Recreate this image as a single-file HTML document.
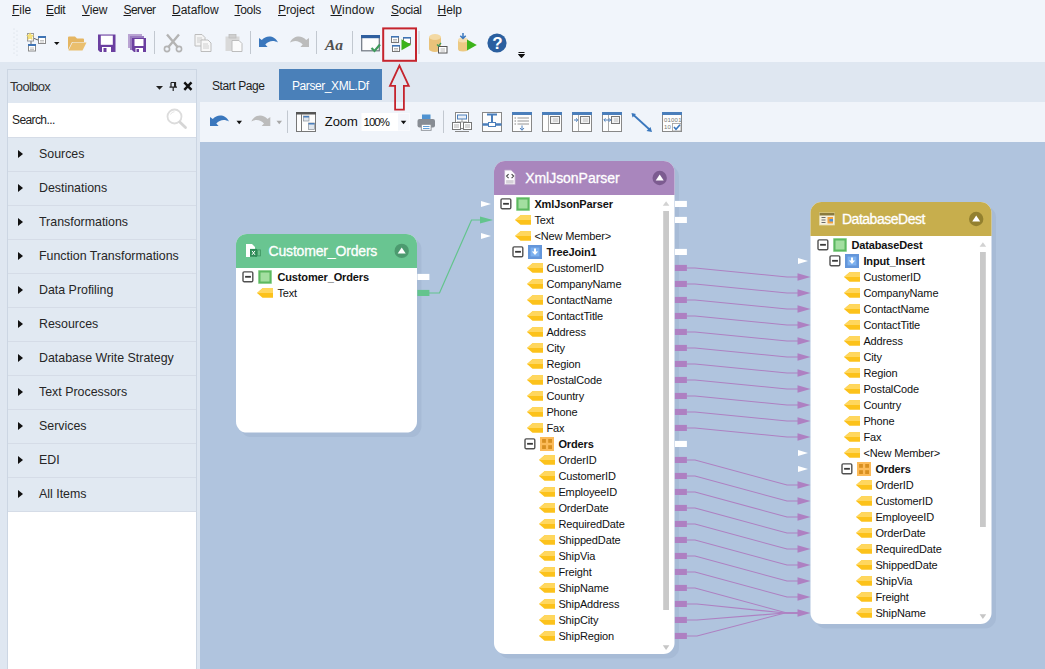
<!DOCTYPE html>
<html><head><meta charset="utf-8"><title>Parser_XML.Df</title>
<style>
*{box-sizing:border-box;margin:0;padding:0}
html,body{width:1045px;height:669px;overflow:hidden;background:#dfe7f1;font-family:"Liberation Sans",sans-serif;color:#1e1e1e}
.abs{position:absolute}
#top{left:0;top:0;width:1045px;height:62px;background:#f1f5fb}
.menu{position:absolute;top:3px;font-size:12px;line-height:14px;color:#1a1a1a;white-space:nowrap}
.menu u{text-decoration:underline;text-underline-offset:1px}
#toolbox{left:7px;top:69px;width:190px;height:601px;padding-top:0;background:#fff;border:1px solid #ccd6e3;border-bottom:none}
#tbhead{left:0;top:0;width:188px;height:33px;background:#dfe7f1}
#tbhead span{position:absolute;left:2px;top:9px;font-size:13px;letter-spacing:-0.66px;color:#333}
#search{left:0;top:33px;width:188px;height:35px;background:#fff}
#search span{position:absolute;left:4px;top:10px;font-size:12px;letter-spacing:-0.6px;color:#222}
.item{position:absolute;left:0;width:188px;height:34px;background:#e1e9f2;border-top:1px solid #d5dce7;font-size:12.4px;line-height:33px;padding-left:31px;color:#262626}
.item:before{content:"";position:absolute;left:9.5px;top:12px;border-left:5px solid #111;border-top:4px solid transparent;border-bottom:4px solid transparent}
#tabs{left:200px;top:69px;width:845px;height:33px;background:#dfe7f1}
.tab{position:absolute;top:0;height:31px;font-size:12px;line-height:31px;padding-top:2px;letter-spacing:-0.42px;color:#1e1e1e;white-space:nowrap}
#doctb{left:200px;top:102px;width:845px;height:40px;background:#f0f4fa}
#canvas{left:200px;top:142px;width:845px;height:527px;background:#b0c4de}
svg text{font-family:"Liberation Sans",sans-serif;font-size:11px;fill:#111;letter-spacing:-0.13px}
</style></head><body>
<div id="top" class="abs">
<span class="menu" style="left:12.0px;letter-spacing:-0.04px"><u>F</u>ile</span>
<span class="menu" style="left:46.0px;letter-spacing:-0.35px"><u>E</u>dit</span>
<span class="menu" style="left:82.0px;letter-spacing:-0.12px"><u>V</u>iew</span>
<span class="menu" style="left:123.5px;letter-spacing:-0.56px"><u>S</u>erver</span>
<span class="menu" style="left:172.0px;letter-spacing:-0.01px"><u>D</u>ataflow</span>
<span class="menu" style="left:234.5px;letter-spacing:-0.32px"><u>T</u>ools</span>
<span class="menu" style="left:278.0px;letter-spacing:-0.11px"><u>P</u>roject</span>
<span class="menu" style="left:330.5px;letter-spacing:0.19px"><u>W</u>indow</span>
<span class="menu" style="left:391.0px;letter-spacing:-0.36px"><u>S</u>ocial</span>
<span class="menu" style="left:437.5px;letter-spacing:-0.05px"><u>H</u>elp</span>
</div>
<div id="toolbox" class="abs">
 <div id="tbhead" class="abs"><span>Toolbox</span></div>
 <div id="search" class="abs"><span>Search...</span></div>
 <div class="item" style="top:67px">Sources</div>
 <div class="item" style="top:101px">Destinations</div>
 <div class="item" style="top:135px">Transformations</div>
 <div class="item" style="top:169px">Function Transformations</div>
 <div class="item" style="top:203px">Data Profiling</div>
 <div class="item" style="top:237px">Resources</div>
 <div class="item" style="top:271px">Database Write Strategy</div>
 <div class="item" style="top:305px">Text Processors</div>
 <div class="item" style="top:339px">Services</div>
 <div class="item" style="top:373px">EDI</div>
 <div class="item" style="top:407px;border-bottom:1px solid #d5dce7;height:35px">All Items</div>
</div>
<div id="tabs" class="abs">
 <span class="tab" style="left:12px">Start Page</span>
 <span class="tab" style="left:79px;width:103px;background:#4a80b9;color:#fff;padding-left:13px">Parser_XML.Df</span>
</div>
<div id="doctb" class="abs"></div>
<div id="canvas" class="abs"></div>
<svg class="abs" style="left:0;top:0" width="1045" height="669" viewBox="0 0 1045 669">
<rect x="240.5" y="238.4" width="181" height="198.7" rx="11" fill="#a7bbd6"/>
<rect x="236" y="233.9" width="181" height="198.7" rx="11" fill="#fff"/>
<path d="M236 267.9 V244.9 a11 11 0 0 1 11 -11 H406 a11 11 0 0 1 11 11 V267.9 Z" fill="#69c591"/>
<text x="268.5" y="256.0" style="font-size:14px;fill:#fff;letter-spacing:-0.17px;stroke:#fff;stroke-width:0.3px">Customer_Orders</text>
<circle cx="401.7" cy="250.9" r="7.2" fill="#4c9a6f"/><path d="M397.7 253.4 L401.7 247.4 L405.7 253.4 Z" fill="#fff"/>
<g transform="translate(246,250.9)"><path d="M0 -7 H6 L9 -4 V6 H0 Z" fill="#fff"/><rect x="4" y="-2" width="7" height="8" fill="#2e8b57"/><path d="M6 0 L9 4 M9 0 L6 4" stroke="#fff" stroke-width="1"/><rect x="11.5" y="-1" width="3" height="6" fill="#6cbf8d" stroke="#3d9462" stroke-width="0.8"/></g>
<rect x="498.5" y="165.5" width="180.5" height="493" rx="11" fill="#a7bbd6"/>
<rect x="494" y="161" width="180.5" height="493" rx="11" fill="#fff"/>
<path d="M494 195 V172 a11 11 0 0 1 11 -11 H663.5 a11 11 0 0 1 11 11 V195 Z" fill="#a986bd"/>
<text x="525.2" y="183.1" style="font-size:14px;fill:#fff;letter-spacing:-0.04px;stroke:#fff;stroke-width:0.3px">XmlJsonParser</text>
<circle cx="659.7" cy="178" r="7.2" fill="#7c5b90"/><path d="M655.7 180.5 L659.7 174.5 L663.7 180.5 Z" fill="#fff"/>
<g transform="translate(504.6,177.6)"><path d="M0 -7.5 H6.5 L10.5 -3.5 V7 H0 Z" fill="#fdfbfe" stroke="#bfaacc" stroke-width="0.8"/><path d="M4 -3.5 L2 -1.5 L4 0.5 M7 -3.5 L9 -1.5 L7 0.5" stroke="#444" stroke-width="1.1" fill="none"/><rect x="1.5" y="2.5" width="7.5" height="3.5" fill="#d4d0d8"/></g>
<rect x="815.0" y="206.5" width="181" height="422" rx="11" fill="#a7bbd6"/>
<rect x="810.5" y="202" width="181" height="422" rx="11" fill="#fff"/>
<path d="M810.5 236 V213 a11 11 0 0 1 11 -11 H980.5 a11 11 0 0 1 11 11 V236 Z" fill="#c7ae4d"/>
<text x="842.0" y="224.1" style="font-size:14px;fill:#fff;letter-spacing:-0.49px;stroke:#fff;stroke-width:0.3px">DatabaseDest</text>
<circle cx="976.2" cy="219" r="7.2" fill="#93802f"/><path d="M972.2 221.5 L976.2 215.5 L980.2 221.5 Z" fill="#fff"/>
<g transform="translate(819.5,219)"><rect x="0" y="-6" width="15" height="12" fill="#f6f1df" stroke="#e7dcb0" stroke-width="0.8"/><rect x="0" y="-6" width="15" height="2.5" fill="#8a7a3d"/><path d="M2 -1.5 H6 M2 1 H6 M2 3.5 H6" stroke="#6b6b6b" stroke-width="1"/><rect x="8" y="-2" width="5.5" height="6.5" fill="#f2a23c"/><rect x="10" y="0" width="3.5" height="2.5" fill="#4f8fd6"/></g>
<g transform="translate(243,277)"><rect x="0" y="-5.1" width="9.8" height="9.8" rx="1.2" fill="#fff" stroke="#505050" stroke-width="1.4"/><rect x="2.1" y="-1.1" width="5.8" height="1.8" fill="#3a3a3a"/></g>
<g transform="translate(258,277)"><rect x="0" y="-7" width="14" height="14" fill="#c8ecc8"/><rect x="1.5" y="-5.5" width="11" height="11" fill="#a3dfa0" stroke="#5cb860" stroke-width="2"/></g>
<text x="277.4" y="281" font-weight="bold">Customer_Orders</text>
<g transform="translate(257,293)"><path d="M0 0 L5.5 -4.7 H16 V4.7 H5.5 Z" fill="#fcc21b"/><path d="M0 0 L5.5 -4.7 H16 V0 Z" fill="#ffd75e"/></g>
<text x="277.4" y="297">Text</text>
<g transform="translate(501,204)"><rect x="0" y="-5.1" width="9.8" height="9.8" rx="1.2" fill="#fff" stroke="#505050" stroke-width="1.4"/><rect x="2.1" y="-1.1" width="5.8" height="1.8" fill="#3a3a3a"/></g>
<g transform="translate(516,204)"><rect x="0" y="-7" width="14" height="14" fill="#c8ecc8"/><rect x="1.5" y="-5.5" width="11" height="11" fill="#a3dfa0" stroke="#5cb860" stroke-width="2"/></g>
<text x="534.4" y="208" font-weight="bold">XmlJsonParser</text>
<g transform="translate(515,220)"><path d="M0 0 L5.5 -4.7 H16 V4.7 H5.5 Z" fill="#fcc21b"/><path d="M0 0 L5.5 -4.7 H16 V0 Z" fill="#ffd75e"/></g>
<text x="534.4" y="224">Text</text>
<g transform="translate(515,236)"><path d="M0 0 L5.5 -4.7 H16 V4.7 H5.5 Z" fill="#fcc21b"/><path d="M0 0 L5.5 -4.7 H16 V0 Z" fill="#ffd75e"/></g>
<text x="534.4" y="240">&lt;New Member&gt;</text>
<g transform="translate(513,252)"><rect x="0" y="-5.1" width="9.8" height="9.8" rx="1.2" fill="#fff" stroke="#505050" stroke-width="1.4"/><rect x="2.1" y="-1.1" width="5.8" height="1.8" fill="#3a3a3a"/></g>
<g transform="translate(528,252)"><rect x="0" y="-7" width="14" height="14" fill="#6496da"/><rect x="2.6" y="-4.4" width="8.8" height="8.8" fill="#7db1ef"/><path d="M6 -3.4 H8 V-0.4 H10.2 L7 3 L3.800 -0.4 H6 Z" fill="#fff"/></g>
<text x="546.4" y="256" font-weight="bold">TreeJoin1</text>
<g transform="translate(527,268)"><path d="M0 0 L5.5 -4.7 H16 V4.7 H5.5 Z" fill="#fcc21b"/><path d="M0 0 L5.5 -4.7 H16 V0 Z" fill="#ffd75e"/></g>
<text x="546.4" y="272">CustomerID</text>
<g transform="translate(527,284)"><path d="M0 0 L5.5 -4.7 H16 V4.7 H5.5 Z" fill="#fcc21b"/><path d="M0 0 L5.5 -4.7 H16 V0 Z" fill="#ffd75e"/></g>
<text x="546.4" y="288">CompanyName</text>
<g transform="translate(527,300)"><path d="M0 0 L5.5 -4.7 H16 V4.7 H5.5 Z" fill="#fcc21b"/><path d="M0 0 L5.5 -4.7 H16 V0 Z" fill="#ffd75e"/></g>
<text x="546.4" y="304">ContactName</text>
<g transform="translate(527,316)"><path d="M0 0 L5.5 -4.7 H16 V4.7 H5.5 Z" fill="#fcc21b"/><path d="M0 0 L5.5 -4.7 H16 V0 Z" fill="#ffd75e"/></g>
<text x="546.4" y="320">ContactTitle</text>
<g transform="translate(527,332)"><path d="M0 0 L5.5 -4.7 H16 V4.7 H5.5 Z" fill="#fcc21b"/><path d="M0 0 L5.5 -4.7 H16 V0 Z" fill="#ffd75e"/></g>
<text x="546.4" y="336">Address</text>
<g transform="translate(527,348)"><path d="M0 0 L5.5 -4.7 H16 V4.7 H5.5 Z" fill="#fcc21b"/><path d="M0 0 L5.5 -4.7 H16 V0 Z" fill="#ffd75e"/></g>
<text x="546.4" y="352">City</text>
<g transform="translate(527,364)"><path d="M0 0 L5.5 -4.7 H16 V4.7 H5.5 Z" fill="#fcc21b"/><path d="M0 0 L5.5 -4.7 H16 V0 Z" fill="#ffd75e"/></g>
<text x="546.4" y="368">Region</text>
<g transform="translate(527,380)"><path d="M0 0 L5.5 -4.7 H16 V4.7 H5.5 Z" fill="#fcc21b"/><path d="M0 0 L5.5 -4.7 H16 V0 Z" fill="#ffd75e"/></g>
<text x="546.4" y="384">PostalCode</text>
<g transform="translate(527,396)"><path d="M0 0 L5.5 -4.7 H16 V4.7 H5.5 Z" fill="#fcc21b"/><path d="M0 0 L5.5 -4.7 H16 V0 Z" fill="#ffd75e"/></g>
<text x="546.4" y="400">Country</text>
<g transform="translate(527,412)"><path d="M0 0 L5.5 -4.7 H16 V4.7 H5.5 Z" fill="#fcc21b"/><path d="M0 0 L5.5 -4.7 H16 V0 Z" fill="#ffd75e"/></g>
<text x="546.4" y="416">Phone</text>
<g transform="translate(527,428)"><path d="M0 0 L5.5 -4.7 H16 V4.7 H5.5 Z" fill="#fcc21b"/><path d="M0 0 L5.5 -4.7 H16 V0 Z" fill="#ffd75e"/></g>
<text x="546.4" y="432">Fax</text>
<g transform="translate(525,444)"><rect x="0" y="-5.1" width="9.8" height="9.8" rx="1.2" fill="#fff" stroke="#505050" stroke-width="1.4"/><rect x="2.1" y="-1.1" width="5.8" height="1.8" fill="#3a3a3a"/></g>
<g transform="translate(540,444)"><rect x="0" y="-7" width="14" height="14" fill="#fcbb59"/><rect x="2.1" y="-5" width="3.8" height="3.8" fill="#d88f20"/><rect x="8.2" y="-5" width="3.8" height="3.8" fill="#d88f20"/><rect x="2.1" y="1.2" width="3.8" height="3.8" fill="#d88f20"/><rect x="8.2" y="1.2" width="3.8" height="3.8" fill="#d88f20"/></g>
<text x="558.4" y="448" font-weight="bold">Orders</text>
<g transform="translate(539,460)"><path d="M0 0 L5.5 -4.7 H16 V4.7 H5.5 Z" fill="#fcc21b"/><path d="M0 0 L5.5 -4.7 H16 V0 Z" fill="#ffd75e"/></g>
<text x="558.4" y="464">OrderID</text>
<g transform="translate(539,476)"><path d="M0 0 L5.5 -4.7 H16 V4.7 H5.5 Z" fill="#fcc21b"/><path d="M0 0 L5.5 -4.7 H16 V0 Z" fill="#ffd75e"/></g>
<text x="558.4" y="480">CustomerID</text>
<g transform="translate(539,492)"><path d="M0 0 L5.5 -4.7 H16 V4.7 H5.5 Z" fill="#fcc21b"/><path d="M0 0 L5.5 -4.7 H16 V0 Z" fill="#ffd75e"/></g>
<text x="558.4" y="496">EmployeeID</text>
<g transform="translate(539,508)"><path d="M0 0 L5.5 -4.7 H16 V4.7 H5.5 Z" fill="#fcc21b"/><path d="M0 0 L5.5 -4.7 H16 V0 Z" fill="#ffd75e"/></g>
<text x="558.4" y="512">OrderDate</text>
<g transform="translate(539,524)"><path d="M0 0 L5.5 -4.7 H16 V4.7 H5.5 Z" fill="#fcc21b"/><path d="M0 0 L5.5 -4.7 H16 V0 Z" fill="#ffd75e"/></g>
<text x="558.4" y="528">RequiredDate</text>
<g transform="translate(539,540)"><path d="M0 0 L5.5 -4.7 H16 V4.7 H5.5 Z" fill="#fcc21b"/><path d="M0 0 L5.5 -4.7 H16 V0 Z" fill="#ffd75e"/></g>
<text x="558.4" y="544">ShippedDate</text>
<g transform="translate(539,556)"><path d="M0 0 L5.5 -4.7 H16 V4.7 H5.5 Z" fill="#fcc21b"/><path d="M0 0 L5.5 -4.7 H16 V0 Z" fill="#ffd75e"/></g>
<text x="558.4" y="560">ShipVia</text>
<g transform="translate(539,572)"><path d="M0 0 L5.5 -4.7 H16 V4.7 H5.5 Z" fill="#fcc21b"/><path d="M0 0 L5.5 -4.7 H16 V0 Z" fill="#ffd75e"/></g>
<text x="558.4" y="576">Freight</text>
<g transform="translate(539,588)"><path d="M0 0 L5.5 -4.7 H16 V4.7 H5.5 Z" fill="#fcc21b"/><path d="M0 0 L5.5 -4.7 H16 V0 Z" fill="#ffd75e"/></g>
<text x="558.4" y="592">ShipName</text>
<g transform="translate(539,604)"><path d="M0 0 L5.5 -4.7 H16 V4.7 H5.5 Z" fill="#fcc21b"/><path d="M0 0 L5.5 -4.7 H16 V0 Z" fill="#ffd75e"/></g>
<text x="558.4" y="608">ShipAddress</text>
<g transform="translate(539,620)"><path d="M0 0 L5.5 -4.7 H16 V4.7 H5.5 Z" fill="#fcc21b"/><path d="M0 0 L5.5 -4.7 H16 V0 Z" fill="#ffd75e"/></g>
<text x="558.4" y="624">ShipCity</text>
<g transform="translate(539,636)"><path d="M0 0 L5.5 -4.7 H16 V4.7 H5.5 Z" fill="#fcc21b"/><path d="M0 0 L5.5 -4.7 H16 V0 Z" fill="#ffd75e"/></g>
<text x="558.4" y="640">ShipRegion</text>
<g transform="translate(818,245)"><rect x="0" y="-5.1" width="9.8" height="9.8" rx="1.2" fill="#fff" stroke="#505050" stroke-width="1.4"/><rect x="2.1" y="-1.1" width="5.8" height="1.8" fill="#3a3a3a"/></g>
<g transform="translate(833,245)"><rect x="0" y="-7" width="14" height="14" fill="#c8ecc8"/><rect x="1.5" y="-5.5" width="11" height="11" fill="#a3dfa0" stroke="#5cb860" stroke-width="2"/></g>
<text x="851.4" y="249" font-weight="bold">DatabaseDest</text>
<g transform="translate(830,261)"><rect x="0" y="-5.1" width="9.8" height="9.8" rx="1.2" fill="#fff" stroke="#505050" stroke-width="1.4"/><rect x="2.1" y="-1.1" width="5.8" height="1.8" fill="#3a3a3a"/></g>
<g transform="translate(845,261)"><rect x="0" y="-7" width="14" height="14" fill="#6496da"/><rect x="2.6" y="-4.4" width="8.8" height="8.8" fill="#7db1ef"/><path d="M6 -3.4 H8 V-0.4 H10.2 L7 3 L3.800 -0.4 H6 Z" fill="#fff"/></g>
<text x="863.4" y="265" font-weight="bold">Input_Insert</text>
<g transform="translate(844,277)"><path d="M0 0 L5.5 -4.7 H16 V4.7 H5.5 Z" fill="#fcc21b"/><path d="M0 0 L5.5 -4.7 H16 V0 Z" fill="#ffd75e"/></g>
<text x="863.4" y="281">CustomerID</text>
<g transform="translate(844,293)"><path d="M0 0 L5.5 -4.7 H16 V4.7 H5.5 Z" fill="#fcc21b"/><path d="M0 0 L5.5 -4.7 H16 V0 Z" fill="#ffd75e"/></g>
<text x="863.4" y="297">CompanyName</text>
<g transform="translate(844,309)"><path d="M0 0 L5.5 -4.7 H16 V4.7 H5.5 Z" fill="#fcc21b"/><path d="M0 0 L5.5 -4.7 H16 V0 Z" fill="#ffd75e"/></g>
<text x="863.4" y="313">ContactName</text>
<g transform="translate(844,325)"><path d="M0 0 L5.5 -4.7 H16 V4.7 H5.5 Z" fill="#fcc21b"/><path d="M0 0 L5.5 -4.7 H16 V0 Z" fill="#ffd75e"/></g>
<text x="863.4" y="329">ContactTitle</text>
<g transform="translate(844,341)"><path d="M0 0 L5.5 -4.7 H16 V4.7 H5.5 Z" fill="#fcc21b"/><path d="M0 0 L5.5 -4.7 H16 V0 Z" fill="#ffd75e"/></g>
<text x="863.4" y="345">Address</text>
<g transform="translate(844,357)"><path d="M0 0 L5.5 -4.7 H16 V4.7 H5.5 Z" fill="#fcc21b"/><path d="M0 0 L5.5 -4.7 H16 V0 Z" fill="#ffd75e"/></g>
<text x="863.4" y="361">City</text>
<g transform="translate(844,373)"><path d="M0 0 L5.5 -4.7 H16 V4.7 H5.5 Z" fill="#fcc21b"/><path d="M0 0 L5.5 -4.7 H16 V0 Z" fill="#ffd75e"/></g>
<text x="863.4" y="377">Region</text>
<g transform="translate(844,389)"><path d="M0 0 L5.5 -4.7 H16 V4.7 H5.5 Z" fill="#fcc21b"/><path d="M0 0 L5.5 -4.7 H16 V0 Z" fill="#ffd75e"/></g>
<text x="863.4" y="393">PostalCode</text>
<g transform="translate(844,405)"><path d="M0 0 L5.5 -4.7 H16 V4.7 H5.5 Z" fill="#fcc21b"/><path d="M0 0 L5.5 -4.7 H16 V0 Z" fill="#ffd75e"/></g>
<text x="863.4" y="409">Country</text>
<g transform="translate(844,421)"><path d="M0 0 L5.5 -4.7 H16 V4.7 H5.5 Z" fill="#fcc21b"/><path d="M0 0 L5.5 -4.7 H16 V0 Z" fill="#ffd75e"/></g>
<text x="863.4" y="425">Phone</text>
<g transform="translate(844,437)"><path d="M0 0 L5.5 -4.7 H16 V4.7 H5.5 Z" fill="#fcc21b"/><path d="M0 0 L5.5 -4.7 H16 V0 Z" fill="#ffd75e"/></g>
<text x="863.4" y="441">Fax</text>
<g transform="translate(844,453)"><path d="M0 0 L5.5 -4.7 H16 V4.7 H5.5 Z" fill="#fcc21b"/><path d="M0 0 L5.5 -4.7 H16 V0 Z" fill="#ffd75e"/></g>
<text x="863.4" y="457">&lt;New Member&gt;</text>
<g transform="translate(842,469)"><rect x="0" y="-5.1" width="9.8" height="9.8" rx="1.2" fill="#fff" stroke="#505050" stroke-width="1.4"/><rect x="2.1" y="-1.1" width="5.8" height="1.8" fill="#3a3a3a"/></g>
<g transform="translate(857,469)"><rect x="0" y="-7" width="14" height="14" fill="#fcbb59"/><rect x="2.1" y="-5" width="3.8" height="3.8" fill="#d88f20"/><rect x="8.2" y="-5" width="3.8" height="3.8" fill="#d88f20"/><rect x="2.1" y="1.2" width="3.8" height="3.8" fill="#d88f20"/><rect x="8.2" y="1.2" width="3.8" height="3.8" fill="#d88f20"/></g>
<text x="875.4" y="473" font-weight="bold">Orders</text>
<g transform="translate(856,485)"><path d="M0 0 L5.5 -4.7 H16 V4.7 H5.5 Z" fill="#fcc21b"/><path d="M0 0 L5.5 -4.7 H16 V0 Z" fill="#ffd75e"/></g>
<text x="875.4" y="489">OrderID</text>
<g transform="translate(856,501)"><path d="M0 0 L5.5 -4.7 H16 V4.7 H5.5 Z" fill="#fcc21b"/><path d="M0 0 L5.5 -4.7 H16 V0 Z" fill="#ffd75e"/></g>
<text x="875.4" y="505">CustomerID</text>
<g transform="translate(856,517)"><path d="M0 0 L5.5 -4.7 H16 V4.7 H5.5 Z" fill="#fcc21b"/><path d="M0 0 L5.5 -4.7 H16 V0 Z" fill="#ffd75e"/></g>
<text x="875.4" y="521">EmployeeID</text>
<g transform="translate(856,533)"><path d="M0 0 L5.5 -4.7 H16 V4.7 H5.5 Z" fill="#fcc21b"/><path d="M0 0 L5.5 -4.7 H16 V0 Z" fill="#ffd75e"/></g>
<text x="875.4" y="537">OrderDate</text>
<g transform="translate(856,549)"><path d="M0 0 L5.5 -4.7 H16 V4.7 H5.5 Z" fill="#fcc21b"/><path d="M0 0 L5.5 -4.7 H16 V0 Z" fill="#ffd75e"/></g>
<text x="875.4" y="553">RequiredDate</text>
<g transform="translate(856,565)"><path d="M0 0 L5.5 -4.7 H16 V4.7 H5.5 Z" fill="#fcc21b"/><path d="M0 0 L5.5 -4.7 H16 V0 Z" fill="#ffd75e"/></g>
<text x="875.4" y="569">ShippedDate</text>
<g transform="translate(856,581)"><path d="M0 0 L5.5 -4.7 H16 V4.7 H5.5 Z" fill="#fcc21b"/><path d="M0 0 L5.5 -4.7 H16 V0 Z" fill="#ffd75e"/></g>
<text x="875.4" y="585">ShipVia</text>
<g transform="translate(856,597)"><path d="M0 0 L5.5 -4.7 H16 V4.7 H5.5 Z" fill="#fcc21b"/><path d="M0 0 L5.5 -4.7 H16 V0 Z" fill="#ffd75e"/></g>
<text x="875.4" y="601">Freight</text>
<g transform="translate(856,613)"><path d="M0 0 L5.5 -4.7 H16 V4.7 H5.5 Z" fill="#fcc21b"/><path d="M0 0 L5.5 -4.7 H16 V0 Z" fill="#ffd75e"/></g>
<text x="875.4" y="617">ShipName</text>
<rect x="663.2" y="211" width="5.8" height="399" fill="#c9c9c9"/><path d="M662.8000000000001 205.79999999999998 L666.1 201.2 L669.4000000000001 205.79999999999998 Z" fill="#d2d2d2"/><path d="M662.8000000000001 645.3 L666.1 649.9 L669.4000000000001 645.3 Z" fill="#c6c6c6"/>
<rect x="980" y="252" width="5.8" height="275" fill="#c9c9c9"/><path d="M979.6 246.79999999999998 L982.9 242.2 L986.2 246.79999999999998 Z" fill="#d2d2d2"/><path d="M979.6 614.3 L982.9 618.9 L986.2 614.3 Z" fill="#c6c6c6"/>
<rect x="417.4" y="273.9" width="12" height="6.1" fill="#fff"/>
<rect x="417.4" y="289.9" width="12" height="6.1" fill="#63c48d"/>
<rect x="674.9" y="200.9" width="12" height="6.1" fill="#fff"/>
<rect x="674.9" y="216.9" width="12" height="6.1" fill="#fff"/>
<rect x="674.9" y="248.9" width="12" height="6.1" fill="#fff"/>
<rect x="674.9" y="440.9" width="12" height="6.1" fill="#fff"/>
<rect x="674.9" y="264.9" width="12" height="6.1" fill="#ae80c2"/>
<rect x="674.9" y="280.9" width="12" height="6.1" fill="#ae80c2"/>
<rect x="674.9" y="296.9" width="12" height="6.1" fill="#ae80c2"/>
<rect x="674.9" y="312.9" width="12" height="6.1" fill="#ae80c2"/>
<rect x="674.9" y="328.9" width="12" height="6.1" fill="#ae80c2"/>
<rect x="674.9" y="344.9" width="12" height="6.1" fill="#ae80c2"/>
<rect x="674.9" y="360.9" width="12" height="6.1" fill="#ae80c2"/>
<rect x="674.9" y="376.9" width="12" height="6.1" fill="#ae80c2"/>
<rect x="674.9" y="392.9" width="12" height="6.1" fill="#ae80c2"/>
<rect x="674.9" y="408.9" width="12" height="6.1" fill="#ae80c2"/>
<rect x="674.9" y="424.9" width="12" height="6.1" fill="#ae80c2"/>
<rect x="674.9" y="456.9" width="12" height="6.1" fill="#ae80c2"/>
<rect x="674.9" y="472.9" width="12" height="6.1" fill="#ae80c2"/>
<rect x="674.9" y="488.9" width="12" height="6.1" fill="#ae80c2"/>
<rect x="674.9" y="504.9" width="12" height="6.1" fill="#ae80c2"/>
<rect x="674.9" y="520.9" width="12" height="6.1" fill="#ae80c2"/>
<rect x="674.9" y="536.9" width="12" height="6.1" fill="#ae80c2"/>
<rect x="674.9" y="552.9" width="12" height="6.1" fill="#ae80c2"/>
<rect x="674.9" y="568.9" width="12" height="6.1" fill="#ae80c2"/>
<rect x="674.9" y="584.9" width="12" height="6.1" fill="#ae80c2"/>
<rect x="674.9" y="600.9" width="12" height="6.1" fill="#ae80c2"/>
<rect x="674.9" y="616.9" width="12" height="6.1" fill="#ae80c2"/>
<rect x="674.9" y="632.9" width="12" height="6.1" fill="#ae80c2"/>
<path d="M491 204 L481 201 V207 Z" fill="#fff"/>
<path d="M491 236 L481 233 V239 Z" fill="#fff"/>
<path d="M493 220 L480 216.5 V223.5 Z" fill="#63c48d"/>
<path d="M429 293 H439.5 L471.5 220 H482" stroke="#63c48d" stroke-width="1.2" fill="none"/>
<path d="M808 261 L798 258 V264 Z" fill="#fff"/>
<path d="M808 453 L798 450 V456 Z" fill="#fff"/>
<path d="M808 469 L798 466 V472 Z" fill="#fff"/>
<path d="M810.5 277 L797.5 273.3 V280.7 Z" fill="#ae80c2"/>
<path d="M810.5 293 L797.5 289.3 V296.7 Z" fill="#ae80c2"/>
<path d="M810.5 309 L797.5 305.3 V312.7 Z" fill="#ae80c2"/>
<path d="M810.5 325 L797.5 321.3 V328.7 Z" fill="#ae80c2"/>
<path d="M810.5 341 L797.5 337.3 V344.7 Z" fill="#ae80c2"/>
<path d="M810.5 357 L797.5 353.3 V360.7 Z" fill="#ae80c2"/>
<path d="M810.5 373 L797.5 369.3 V376.7 Z" fill="#ae80c2"/>
<path d="M810.5 389 L797.5 385.3 V392.7 Z" fill="#ae80c2"/>
<path d="M810.5 405 L797.5 401.3 V408.7 Z" fill="#ae80c2"/>
<path d="M810.5 421 L797.5 417.3 V424.7 Z" fill="#ae80c2"/>
<path d="M810.5 437 L797.5 433.3 V440.7 Z" fill="#ae80c2"/>
<path d="M810.5 485 L797.5 481.3 V488.7 Z" fill="#ae80c2"/>
<path d="M810.5 501 L797.5 497.3 V504.7 Z" fill="#ae80c2"/>
<path d="M810.5 517 L797.5 513.3 V520.7 Z" fill="#ae80c2"/>
<path d="M810.5 533 L797.5 529.3 V536.7 Z" fill="#ae80c2"/>
<path d="M810.5 549 L797.5 545.3 V552.7 Z" fill="#ae80c2"/>
<path d="M810.5 565 L797.5 561.3 V568.7 Z" fill="#ae80c2"/>
<path d="M810.5 581 L797.5 577.3 V584.7 Z" fill="#ae80c2"/>
<path d="M810.5 597 L797.5 593.3 V600.7 Z" fill="#ae80c2"/>
<path d="M810.5 613 L797.5 609.3 V616.7 Z" fill="#ae80c2"/>
<path d="M687 268 H695 L787 277 H798" stroke="#ae80c2" stroke-width="1.1" fill="none"/>
<path d="M687 284 H695 L787 293 H798" stroke="#ae80c2" stroke-width="1.1" fill="none"/>
<path d="M687 300 H695 L787 309 H798" stroke="#ae80c2" stroke-width="1.1" fill="none"/>
<path d="M687 316 H695 L787 325 H798" stroke="#ae80c2" stroke-width="1.1" fill="none"/>
<path d="M687 332 H695 L787 341 H798" stroke="#ae80c2" stroke-width="1.1" fill="none"/>
<path d="M687 348 H695 L787 357 H798" stroke="#ae80c2" stroke-width="1.1" fill="none"/>
<path d="M687 364 H695 L787 373 H798" stroke="#ae80c2" stroke-width="1.1" fill="none"/>
<path d="M687 380 H695 L787 389 H798" stroke="#ae80c2" stroke-width="1.1" fill="none"/>
<path d="M687 396 H695 L787 405 H798" stroke="#ae80c2" stroke-width="1.1" fill="none"/>
<path d="M687 412 H695 L787 421 H798" stroke="#ae80c2" stroke-width="1.1" fill="none"/>
<path d="M687 428 H695 L787 437 H798" stroke="#ae80c2" stroke-width="1.1" fill="none"/>
<path d="M687 460 H695 L787 485 H798" stroke="#ae80c2" stroke-width="1.1" fill="none"/>
<path d="M687 476 H695 L787 501 H798" stroke="#ae80c2" stroke-width="1.1" fill="none"/>
<path d="M687 492 H695 L787 517 H798" stroke="#ae80c2" stroke-width="1.1" fill="none"/>
<path d="M687 508 H695 L787 533 H798" stroke="#ae80c2" stroke-width="1.1" fill="none"/>
<path d="M687 524 H695 L787 549 H798" stroke="#ae80c2" stroke-width="1.1" fill="none"/>
<path d="M687 540 H695 L787 565 H798" stroke="#ae80c2" stroke-width="1.1" fill="none"/>
<path d="M687 556 H695 L787 581 H798" stroke="#ae80c2" stroke-width="1.1" fill="none"/>
<path d="M687 572 H695 L787 597 H798" stroke="#ae80c2" stroke-width="1.1" fill="none"/>
<path d="M687 588 H695 L787 613 H798" stroke="#ae80c2" stroke-width="1.1" fill="none"/>
<path d="M687 604 H697 L785 613 H798" stroke="#ae80c2" stroke-width="1.1" fill="none"/>
<path d="M687 620 H697 L785 613 H798" stroke="#ae80c2" stroke-width="1.1" fill="none"/>
<path d="M687 636 H697 L785 613 H798" stroke="#ae80c2" stroke-width="1.1" fill="none"/>
<!-- main toolbar -->
<g id="grip" fill="#d3d8e0">
<circle cx="14" cy="29" r="0.6"/><circle cx="14" cy="33" r="0.6"/><circle cx="14" cy="37" r="0.6"/><circle cx="14" cy="41" r="0.6"/><circle cx="14" cy="45" r="0.6"/><circle cx="14" cy="49" r="0.6"/><circle cx="14" cy="53" r="0.6"/>
<circle cx="17" cy="31" r="0.6"/><circle cx="17" cy="35" r="0.6"/><circle cx="17" cy="39" r="0.6"/><circle cx="17" cy="43" r="0.6"/><circle cx="17" cy="47" r="0.6"/><circle cx="17" cy="51" r="0.6"/><circle cx="17" cy="55" r="0.6"/>
</g>
<!-- new dataflow -->
<g>
<path d="M33 38 L38 40 M31 41 V44" stroke="#666" stroke-width="1" fill="none"/>
<rect x="27.500" y="33.500" width="6" height="7.500" fill="#fff" stroke="#9a9a9a"/>
<path d="M30 32.800 L31.100 35 L33.500 35.400 L31.800 37 L32.200 39.400 L30 38.300 L27.800 39.400 L28.200 37 L26.600 35.400 L28.900 35 Z" fill="#f6e27a" stroke="#e9cf55" stroke-width="0.5"/>
<rect x="38.5" y="36.5" width="7" height="7" fill="#fff" stroke="#8a8a8a"/><rect x="38" y="36" width="8" height="2" fill="#3f74b5"/>
<path d="M40 40.5 H44 M40 42 H44" stroke="#aaa" stroke-width="0.7"/>
<rect x="28.5" y="44.500" width="7" height="6.5" fill="#fff" stroke="#8a8a8a"/><rect x="28" y="44" width="8" height="2" fill="#3f74b5"/>
<path d="M30 48 H34 M30 49.500 H34" stroke="#aaa" stroke-width="0.7"/>
</g>
<path d="M54 42 H59.500 L56.750 45 Z" fill="#111"/>
<!-- folder -->
<g>
<path d="M68 50 V37.500 a1 1 0 0 1 1 -1 H75 L77 38.500 H83 a1 1 0 0 1 1 1 V42 H72 L68 50 Z" fill="#e5b662"/>
<path d="M68.500 50.500 L72.500 42.500 H86.500 L82.500 50.500 Z" fill="#eabf6e"/>
</g>
<!-- save -->
<g>
<path d="M98 34.500 H115.500 V52 H100 L98 50 Z" fill="#6b3fa0"/>
<rect x="100.800" y="35.600" width="12" height="9.200" fill="#fff"/>
<rect x="102" y="47" width="9" height="5" fill="#fff"/><rect x="103.500" y="48" width="3" height="4" fill="#6b3fa0"/>
</g>
<!-- save all -->
<g>
<path d="M128 34 H142 V48 H128 Z" fill="#b9a3d3"/>
<path d="M130 36 H144 V50 H130 Z" fill="#9a7cc0"/>
<path d="M132 38 H146 V52 H134 L132 50 Z" fill="#6b3fa0"/>
<rect x="134.500" y="39" width="9" height="7" fill="#fff"/>
<rect x="135.500" y="48" width="7.500" height="4" fill="#fff"/><rect x="136.500" y="49" width="2.500" height="3" fill="#6b3fa0"/>
</g>
<path d="M154.500 31 V54 M250.500 31 V54 M316.500 31 V54 M352.500 31 V54 M419 31 V54" stroke="#c2c8d0" stroke-width="1"/>
<!-- scissors -->
<g stroke="#b4b4b4" fill="none" stroke-width="2">
<path d="M167 34.500 L178 47.500 M179 34.500 L168 47.500" stroke-width="2.400"/>
<circle cx="167" cy="49" r="2.600" stroke-width="1.600"/><circle cx="179" cy="49" r="2.600" stroke-width="1.600"/>
</g>
<!-- copy -->
<g>
<path d="M195 34.500 H202 L205 37.500 V46 H195 Z" fill="#f4f4f4" stroke="#bdbdbd"/>
<path d="M197 38 H202 M197 40 H203 M197 42 H200" stroke="#c4c4c4" stroke-width="0.8"/>
<path d="M201 40 H208 L211 43 V51.500 H201 Z" fill="#f8f8f8" stroke="#bdbdbd"/>
<path d="M203 44 H208 M203 46 H209 M203 48 H209" stroke="#c4c4c4" stroke-width="0.8"/>
</g>
<!-- paste -->
<g>
<rect x="225.500" y="36.500" width="14" height="14.500" fill="#d9d9d9"/>
<rect x="229" y="34.500" width="7" height="3.500" fill="#cfcfcf" stroke="#bdbdbd" stroke-width="0.8"/>
<path d="M232 40.500 H239 L242 43.500 V51.500 H232 Z" fill="#fbfbfb" stroke="#bdbdbd"/>
</g>
<!-- undo -->
<path id="undoP" d="M259 47 V38 L261.800 40 C266 35 274.500 35 278 42.500 C273.500 39.800 268.500 40.800 265.300 44.600 L267.600 47 Z" fill="#3a77bd"/>
<!-- redo -->
<path d="M309 47 V38 L306.200 40 C302 35 293.500 35 290 42.500 C294.500 39.800 299.500 40.800 302.700 44.600 L300.400 47 Z" fill="#bcbcbc"/>
<!-- Aa -->
<text x="325" y="49.500" style="font-family:'Liberation Serif',serif;font-size:15.500px;font-style:italic;font-weight:bold;fill:#505050">Aa</text>
<!-- window check -->
<g>
<rect x="361.700" y="36" width="17.600" height="14.800" fill="#fdfdfd" stroke="#6f7680" stroke-width="1.200"/>
<rect x="361" y="35" width="19" height="3.200" fill="#2f5f9f"/>
<path d="M371.500 48 L374.500 51 L380 44.500" stroke="#3f9a5c" stroke-width="2.200" fill="none"/>
</g>
<!-- run (highlighted) -->
<g>
<rect x="391.500" y="36.500" width="7" height="6" fill="#fff" stroke="#777"/><rect x="391" y="36" width="8" height="1.600" fill="#3f74b5"/>
<path d="M393 39.500 H397 M393 41 H397" stroke="#999" stroke-width="0.7"/>
<rect x="403.500" y="37.500" width="7" height="6" fill="#fff" stroke="#777"/><rect x="403" y="37" width="8" height="1.600" fill="#3f74b5"/>
<rect x="392.500" y="45.500" width="7" height="6" fill="#fff" stroke="#777"/><rect x="392" y="45" width="8" height="1.600" fill="#3f74b5"/>
<path d="M394 48.500 H398 M394 50 H398" stroke="#999" stroke-width="0.7"/>
<path d="M401.500 39.300 L411.300 44.700 L401.500 50.200 Z" fill="#3cb31a"/>
</g>
<rect x="383.200" y="28.400" width="32.800" height="32.400" fill="none" stroke="#c5242d" stroke-width="2"/>
<path d="M399.400 65.700 L408.800 85.800 H403.900 V109.600 H395.100 V85.800 H390 Z" fill="none" stroke="#c5242d" stroke-width="1.800"/>
<!-- db -->
<g>
<path d="M429 37 V49 a6 3 0 0 0 12 0 V37 Z" fill="#e9c27a"/><ellipse cx="435" cy="37" rx="6" ry="3" fill="#f3d9a4"/>
<rect x="438.500" y="46.500" width="8.500" height="6.500" fill="#fff" stroke="#555"/>
<path d="M440.500 49 H445 M440.500 51 H445" stroke="#999" stroke-width="0.7"/>
<path d="M437 44.500 L438.500 46 L441 43" stroke="#3f9a5c" stroke-width="1.200" fill="none"/>
</g>
<!-- db run -->
<g>
<path d="M458 40 V49 a5 2.500 0 0 0 10 0 V40 Z" fill="#ecc982"/><ellipse cx="463" cy="40" rx="5" ry="2.500" fill="#f5deb0"/>
<path d="M463 33 V38 M460.300 35.800 L463 38.500 L465.700 35.800" stroke="#3a77bd" stroke-width="1.500" fill="none"/>
<path d="M467 39.500 L476.800 45 L467 50.500 Z" fill="#3cb31a"/>
</g>
<!-- help -->
<circle cx="497" cy="43" r="9.600" fill="#2b5f9f"/>
<text x="492.300" y="49" style="font-size:17px;font-weight:bold;fill:#fff">?</text>
<path d="M518.500 52.500 H524.500 M518.500 54.500 H524.500 L521.500 57.800 Z" stroke="#111" stroke-width="1" fill="#111"/>
<!-- toolbox header icons -->
<path d="M156 86 H163 L159.500 89.800 Z" fill="#222"/>
<path d="M171 82.500 H175.500 V87 M171 82.500 V87 M169.500 87.200 H177 M173.200 87 V91" stroke="#222" stroke-width="1.200" fill="none"/>
<rect x="174" y="82.500" width="1.500" height="4.500" fill="#222"/>
<path d="M184.300 82.300 L191.500 89.900 M191.500 82.300 L184.300 89.900" stroke="#111" stroke-width="2.400"/>
<!-- magnifier -->
<circle cx="174.500" cy="116.500" r="7" fill="#fff" stroke="#dcdcdc" stroke-width="1.800"/>
<path d="M170.500 114.500 a4.500 4.500 0 0 1 4 -2.800" stroke="#e4e4e4" stroke-width="1" fill="none"/>
<path d="M179.800 122 L185.500 127.500" stroke="#d6d6d6" stroke-width="2.800" stroke-linecap="round"/>
<!-- doc toolbar -->
<path d="M210 126 V117 L212.800 119 C217 114 225.500 114 229 121.500 C224.500 118.800 219.500 119.800 216.300 123.600 L218.600 126 Z" fill="#3a77bd"/>
<path d="M236.500 120.800 H242 L239.250 124.300 Z" fill="#111"/>
<path d="M270.300 126 V117 L267.500 119 C263.300 114 254.800 114 251.300 121.500 C255.800 118.800 260.800 119.800 264 123.600 L261.700 126 Z" fill="#bcbcbc"/>
<path d="M276.500 120.800 H282 L279.250 124.300 Z" fill="#a8a8a8"/>
<path d="M287.500 110.500 V133 M443.500 110.500 V133" stroke="#c2c8d0" stroke-width="1"/>
<!-- layout icon -->
<g>
<rect x="296.500" y="112.500" width="19" height="19" fill="#fdfdfd" stroke="#777"/>
<rect x="296" y="112" width="20" height="2.500" fill="#555"/>
<path d="M301.500 114 V131" stroke="#777"/>
<rect x="303.500" y="116" width="5.500" height="5" fill="#dfe6ee" stroke="#8a9099" stroke-width="0.700"/><rect x="303.500" y="116" width="5.500" height="1.500" fill="#4a7ebb"/>
<rect x="308.500" y="123" width="6" height="6.500" fill="#dfe6ee" stroke="#8a9099" stroke-width="0.700"/><rect x="308.500" y="123" width="6" height="1.500" fill="#4a7ebb"/>
</g>
<text x="324.800" y="126" style="font-size:13px;fill:#111;letter-spacing:-0.1px">Zoom</text>
<rect x="361.500" y="113" width="48" height="18" fill="#fff"/><rect x="398" y="113.500" width="11" height="17" fill="#f3f6fb"/>
<text x="363.400" y="126" style="font-size:11.400px;fill:#111;letter-spacing:-0.85px">100%</text>
<path d="M400.800 120.800 H406.300 L403.550 124.300 Z" fill="#111"/>
<!-- printer -->
<g>
<rect x="421.5" y="114" width="9.500" height="6" fill="#4f93d2" stroke="#eef3f8" stroke-width="1"/>
<rect x="417.500" y="119" width="17.500" height="8.500" rx="2" fill="#878c93"/>
<rect x="421.300" y="124.300" width="9.800" height="6" fill="#fff" stroke="#878c93" stroke-width="0.9"/>
<path d="M423 126.500 H429.500 M423 128.500 H429.500" stroke="#4f93d2" stroke-width="0.9"/>
</g>
<!-- icon1 -->
<g>
<rect x="455.500" y="112.500" width="13" height="16" fill="#fff" stroke="#888"/>
<rect x="457.500" y="115" width="9" height="4" fill="#e9eff7" stroke="#4a7ebb"/>
<path d="M462 119 V122 M457 122 H467" stroke="#888" stroke-width="0.8"/>
<rect x="452.500" y="122.500" width="8" height="7" fill="#fff" stroke="#777"/><rect x="463.500" y="122.500" width="8" height="7" fill="#fff" stroke="#777"/>
<path d="M454 125 H459 M454 127 H459 M465 125 H470 M465 127 H470" stroke="#999" stroke-width="0.8"/>
<path d="M455 131.500 H469" stroke="#888"/>
</g>
<!-- icon2 -->
<g>
<rect x="482.500" y="112.500" width="19" height="19" fill="#fdfdfd" stroke="#888"/>
<path d="M487 114.500 H497 M492 114.500 V124" stroke="#4a7ebb" stroke-width="2"/>
<path d="M482.500 124.500 H501.500" stroke="#4a7ebb" stroke-width="2.500"/>
<rect x="488.500" y="122.500" width="7" height="4" fill="#fff" stroke="#4a7ebb" stroke-width="1"/>
</g>
<!-- icon3 -->
<g>
<rect x="512.500" y="112.500" width="19" height="19" fill="#fdfdfd" stroke="#888"/><rect x="512" y="112" width="20" height="3" fill="#4a7ebb"/>
<path d="M517.500 118 H529 M517.500 121 H529 M517.500 124 H529" stroke="#888" stroke-width="0.9"/>
<path d="M514.500 118 H516 M514.500 121 H516 M514.500 124 H516" stroke="#888" stroke-width="1"/>
<path d="M522 125.500 V130 M520 128 L522 130.300 L524 128" stroke="#4a7ebb" stroke-width="1" fill="none"/>
</g>
<!-- icon4 -->
<g>
<rect x="542.500" y="112.500" width="19" height="19" fill="#fdfdfd" stroke="#888"/><rect x="542" y="112" width="20" height="3" fill="#4a7ebb"/>
<path d="M548.500 115 V131" stroke="#aaa" stroke-width="1"/>
<rect x="550.500" y="116.500" width="9" height="7" fill="#f2f2f2" stroke="#777"/>
<path d="M553 119 H558 M553 121 H558" stroke="#aaa" stroke-width="0.700"/>
</g>
<!-- icon5 -->
<g>
<rect x="572.500" y="112.500" width="19" height="19" fill="#fdfdfd" stroke="#888"/><rect x="572" y="112" width="20" height="3" fill="#4a7ebb"/>
<path d="M578.500 115 V131" stroke="#aaa" stroke-width="1"/>
<rect x="580.500" y="116.500" width="9" height="7" fill="#f2f2f2" stroke="#777"/>
<path d="M583 119 H588 M583 121 H588" stroke="#aaa" stroke-width="0.700"/>
<path d="M574 120 H577.500 M576 118.300 L577.800 120 L576 121.700" stroke="#4a7ebb" stroke-width="1" fill="none"/>
</g>
<!-- icon6 -->
<g>
<rect x="602.500" y="112.500" width="19" height="19" fill="#fdfdfd" stroke="#888"/><rect x="602" y="112" width="20" height="3" fill="#4a7ebb"/>
<path d="M608.500 115 V131" stroke="#aaa" stroke-width="1"/>
<rect x="611.500" y="116.500" width="8" height="7" fill="#f2f2f2" stroke="#777"/>
<path d="M614 119 H618 M614 121 H618" stroke="#aaa" stroke-width="0.700"/>
<path d="M604 120 H610.500 M605.500 118.300 L603.800 120 L605.500 121.700 M609 118.300 L610.700 120 L609 121.700" stroke="#4a7ebb" stroke-width="1" fill="none"/>
</g>
<!-- icon7 -->
<path d="M633 114.500 L649.500 129.500" stroke="#3a77bd" stroke-width="1.800"/>
<path d="M631.500 113 L636 114 L632.500 117.500 Z M652 132 L646.500 131 L650.500 127 Z" fill="#3a77bd"/>
<!-- icon8 -->
<g>
<rect x="662.500" y="112.500" width="19" height="19" fill="#fdfdfd" stroke="#888"/><rect x="662" y="112" width="20" height="3" fill="#4a7ebb"/>
<text x="664" y="122" style="font-size:6px;fill:#777;letter-spacing:0.2px">01001</text>
<text x="664" y="129" style="font-size:6px;fill:#777;letter-spacing:0.2px">10</text>
<rect x="672.500" y="123.500" width="8.500" height="7.500" fill="#fff" stroke="#999" stroke-width="0.800"/>
<path d="M674 127 L676 129.300 L680 124.800" stroke="#3a77bd" stroke-width="1.600" fill="none"/>
</g>

</svg>
</body></html>
